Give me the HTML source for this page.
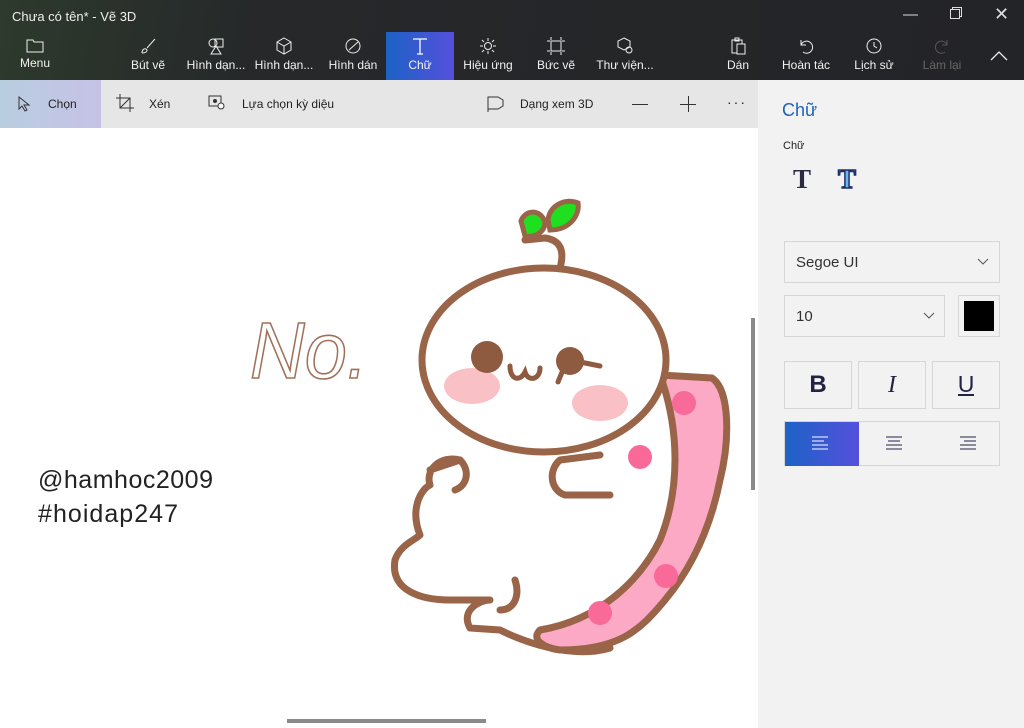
<!DOCTYPE html>
<html><head><meta charset="utf-8">
<style>
*{margin:0;padding:0;box-sizing:border-box}
body{width:1024px;height:728px;overflow:hidden;font-family:"Liberation Sans","Noto Sans CJK SC",sans-serif;background:#fff;position:relative}
#top{position:absolute;left:0;top:0;width:1024px;height:80px;background:linear-gradient(100deg,#2d3a2c 0%,#26282a 25%,#232427 100%);color:#fff}
.title{position:absolute;left:12px;top:9px;font-size:13px;color:#eee}
.wc{position:absolute;top:6px;font-size:15px;color:#ddd}
.tb{position:absolute;top:32px;height:48px;text-align:center;font-size:12px;color:#f2f2f2}
.tb svg{display:block;margin:5px auto 3px}
.tb.act{background:linear-gradient(90deg,#1d62c6,#5550dc)}
#sub{position:absolute;left:0;top:80px;width:758px;height:48px;background:#e6e6e6;font-size:12px;color:#222}
#sub .it{position:absolute;top:0;height:48px;line-height:48px}
#canvas{position:absolute;left:0;top:128px;width:758px;height:600px;background:#fff}
#panel{position:absolute;left:758px;top:80px;width:266px;height:648px;background:#f2f2f3}
.box{position:absolute;border:1px solid #d6d6d6;background:#f2f2f3}
</style></head><body>
<div id="top">
 <div class="title">Chưa có tên* - Vẽ 3D</div>
 <div class="wc" style="left:903px">&#8212;</div>
 <div class="wc" style="left:950px;top:9px;width:10px;height:10px;border:1px solid #ddd;box-shadow:2px -2px 0 -1px #232427,2px -2px 0 0 #ddd"></div>
 <div class="wc" style="left:994px;top:4px;font-size:18px">✕</div>
 <div class="tb" style="left:10px;width:50px"><svg width="18" height="16"><path d="M1 3h6l1 2h9v10H1z" fill="none" stroke="#eee"/></svg>Menu</div>
 <div class="tb" style="left:124px;width:48px"><svg width="18" height="18"><path d="M16 2 8 11M3 16c0-3 2-5 4-4s1 4-4 4" fill="none" stroke="#eee"/></svg>Bút vẽ</div>
 <div class="tb" style="left:185px;width:62px"><svg width="18" height="18"><circle cx="6" cy="6" r="4" fill="none" stroke="#eee"/><rect x="8" y="2" width="8" height="8" fill="none" stroke="#eee"/><path d="M9 9 4 17h10z" fill="none" stroke="#eee"/></svg>Hình dạn...</div>
 <div class="tb" style="left:253px;width:62px"><svg width="18" height="18"><path d="M9 1 16 5v8l-7 4-7-4V5zM2 5l7 4 7-4M9 9v8" fill="none" stroke="#eee"/></svg>Hình dạn...</div>
 <div class="tb" style="left:325px;width:56px"><svg width="18" height="18"><circle cx="9" cy="9" r="7" fill="none" stroke="#eee"/><path d="M5 13 14 5" stroke="#eee"/></svg>Hình dán</div>
 <div class="tb act" style="left:386px;width:68px"><svg width="18" height="18"><path d="M2 2h14M9 2v15M6 17h6" stroke="#fff" fill="none" stroke-width="1.3"/></svg>Chữ</div>
 <div class="tb" style="left:460px;width:56px"><svg width="18" height="18"><circle cx="9" cy="9" r="3.5" fill="none" stroke="#eee"/><path d="M9 1v3M9 14v3M1 9h3M14 9h3M3 3l2 2M13 13l2 2M3 15l2-2M13 5l2-2" stroke="#eee"/></svg>Hiệu ứng</div>
 <div class="tb" style="left:532px;width:48px"><svg width="18" height="18"><rect x="4" y="4" width="10" height="10" fill="none" stroke="#eee"/><path d="M4 0v3M14 0v3M4 15v3M14 15v3M0 4h3M0 14h3M15 4h3M15 14h3" stroke="#eee"/></svg>Bức vẽ</div>
 <div class="tb" style="left:594px;width:62px"><svg width="18" height="18"><path d="M8 1 14 4v6l-6 3-6-3V4z" fill="none" stroke="#eee"/><circle cx="13" cy="13" r="3" fill="none" stroke="#eee"/></svg>Thư viện...</div>
 <div class="tb" style="left:722px;width:32px"><svg width="18" height="18"><rect x="3" y="3" width="10" height="13" fill="none" stroke="#eee"/><rect x="8" y="7" width="8" height="10" fill="#232427" stroke="#eee"/><rect x="6" y="1" width="4" height="3" fill="none" stroke="#eee"/></svg>Dán</div>
 <div class="tb" style="left:778px;width:56px"><svg width="18" height="18"><path d="M4 3v5h5M4 8a6 6 0 1 1 2 7" fill="none" stroke="#eee"/></svg>Hoàn tác</div>
 <div class="tb" style="left:850px;width:48px"><svg width="18" height="18"><circle cx="9" cy="9" r="7" fill="none" stroke="#eee"/><path d="M9 5v4l3 2" fill="none" stroke="#eee"/></svg>Lịch sử</div>
 <div class="tb" style="left:918px;width:48px;color:#666"><svg width="18" height="18"><path d="M14 3v5H9M14 8a6 6 0 1 0-2 7" fill="none" stroke="#555"/></svg>Làm lại</div>
 <svg style="position:absolute;left:990px;top:50px" width="18" height="12"><path d="M1 10 9 2l8 8" fill="none" stroke="#eee" stroke-width="1.3"/></svg>
</div>
<div id="sub">
 <div class="it" style="left:0;width:101px;background:linear-gradient(90deg,#b9cde0,#c6c2e6)"><svg style="position:absolute;left:17px;top:16px" width="14" height="16"><path d="M2 1v12l3-3 3 5 2-1-3-5h5z" fill="none" stroke="#333"/></svg><span style="position:absolute;left:48px">Chọn</span></div>
 <div class="it" style="left:116px"><svg style="position:absolute;left:0;top:14px" width="18" height="18"><path d="M4 0v14h14M0 4h14v14M14 4 4 14" fill="none" stroke="#333"/></svg><span style="position:absolute;left:33px">Xén</span></div>
 <div class="it" style="left:208px;width:140px"><svg style="position:absolute;left:0;top:15px" width="18" height="16"><rect x="1" y="1" width="12" height="10" fill="none" stroke="#333"/><circle cx="7" cy="6" r="2" fill="#333"/><circle cx="13" cy="11" r="3" fill="#fff" stroke="#333"/></svg><span style="position:absolute;left:34px;white-space:nowrap">Lựa chọn kỳ diệu</span></div>
 <div class="it" style="left:487px;width:120px"><svg style="position:absolute;left:0;top:16px" width="18" height="16"><path d="M1 1h10l5 3v6l-5 3H1zM1 1v15" fill="none" stroke="#333"/></svg><span style="position:absolute;left:33px;white-space:nowrap">Dạng xem 3D</span></div>
 <div style="position:absolute;left:632px;top:24px;width:16px;height:1px;background:#333"></div>
 <div style="position:absolute;left:680px;top:24px;width:16px;height:1px;background:#333"></div>
 <div style="position:absolute;left:688px;top:16px;width:1px;height:16px;background:#333"></div>
 <div style="position:absolute;left:727px;top:14px;font-size:14px;letter-spacing:2px">···</div>
</div>
<div id="canvas">
<svg width="758" height="600" viewBox="0 128 758 600" style="position:absolute;left:0;top:0">
 <text x="250" y="378" font-family="Liberation Sans" font-style="italic" font-size="80" fill="none" stroke="#a0705a" stroke-width="1.6" textLength="118" lengthAdjust="spacingAndGlyphs">No.</text>
 <text x="38" y="488" font-family="Liberation Sans" font-size="25" fill="#222" textLength="175">@hamhoc2009</text>
 <text x="38" y="522" font-family="Liberation Sans" font-size="25" fill="#222" textLength="140">#hoidap247</text>
 <g stroke="#9a6448" stroke-width="7" stroke-linecap="round" stroke-linejoin="round">
  <path d="M610 648 C570 660 520 640 500 630 L470 628 C460 610 480 600 490 600 L450 600 C420 600 390 590 395 560 C400 545 415 540 420 535 C410 510 420 490 430 485 C425 470 440 455 460 460" fill="#fff"/>
  <path d="M660 375 L712 378 C730 390 730 440 720 480 C710 530 690 570 665 600 C640 630 620 650 560 650 C545 648 530 640 540 630 C600 620 640 580 660 540 C680 490 680 430 660 375Z" fill="#fba9c4"/>
  <ellipse cx="544" cy="360" rx="122" ry="92" fill="#fff"/>
  <path d="M560 268 C565 250 560 240 545 238 L525 240" fill="none"/>
  <path d="M600 455 L560 460 C548 470 550 490 565 495 L610 495" fill="#fff"/>
  <path d="M430 470 L460 460 C470 470 468 485 455 490" fill="#fff"/>
  <path d="M515 580 C520 595 515 610 500 610" fill="none"/>
 </g>
 <path d="M521 221 C525 210 540 208 545 222 C545 232 535 238 525 236Z" fill="#1fe01f" stroke="#9a6448" stroke-width="5"/>
 <path d="M548 220 C550 205 565 198 578 203 C580 215 570 230 550 230Z" fill="#1fe01f" stroke="#9a6448" stroke-width="5"/>
 <ellipse cx="472" cy="386" rx="28" ry="18" fill="#f7b0b8" opacity=".8"/>
 <ellipse cx="600" cy="403" rx="28" ry="18" fill="#f7b0b8" opacity=".8"/>
 <circle cx="487" cy="357" r="16" fill="#8e5a40"/>
 <circle cx="570" cy="361" r="14" fill="#8e5a40"/>
 <path d="M558 382 L565 365 M570 360 L600 366 M510 366 C510 380 520 382 525 372 C528 382 540 380 540 368" fill="none" stroke="#8e5a40" stroke-width="5" stroke-linecap="round"/>
 <g fill="#fa6a98"><circle cx="684" cy="403" r="12"/><circle cx="640" cy="457" r="12"/><circle cx="666" cy="576" r="12"/><circle cx="600" cy="613" r="12"/></g>
</svg>
 <div style="position:absolute;left:751px;top:190px;width:4px;height:172px;background:#8a8a8a"></div>
 <div style="position:absolute;left:287px;top:591px;width:199px;height:4px;background:#8a8a8a"></div>
</div>
<div id="panel">
 <div style="position:absolute;left:24px;top:20px;font-size:18px;color:#1f63b8">Chữ</div>
 <div style="position:absolute;left:25px;top:60px;font-size:11px;color:#222">Chữ</div>
 <div style="position:absolute;left:35px;top:84px;font-size:27px;font-weight:bold;font-family:'Liberation Serif',serif;color:#2a2a45">T</div>
 <div style="position:absolute;left:80px;top:84px;font-size:27px;font-weight:bold;font-family:'Liberation Serif',serif;color:#6cb4f2;-webkit-text-stroke:1.5px #20306a">T</div>
 <div class="box" style="left:26px;top:161px;width:216px;height:42px"><span style="position:absolute;left:11px;top:12px;font-size:15px;color:#333">Segoe UI</span><svg style="position:absolute;left:192px;top:16px" width="12" height="8"><path d="M1 1l5 5 5-5" fill="none" stroke="#555"/></svg></div>
 <div class="box" style="left:26px;top:215px;width:161px;height:42px"><span style="position:absolute;left:11px;top:12px;font-size:15px;color:#333">10</span><svg style="position:absolute;left:138px;top:16px" width="12" height="8"><path d="M1 1l5 5 5-5" fill="none" stroke="#555"/></svg></div>
 <div class="box" style="left:200px;top:215px;width:42px;height:42px"><div style="position:absolute;left:5px;top:5px;width:30px;height:30px;background:#000"></div></div>
 <div class="box" style="left:26px;top:281px;width:68px;height:48px;text-align:center;line-height:46px;font-size:24px;font-weight:bold;color:#222244">B</div>
 <div class="box" style="left:100px;top:281px;width:68px;height:48px;text-align:center;line-height:46px;font-size:24px;font-style:italic;font-family:'Liberation Serif',serif;color:#222244">I</div>
 <div class="box" style="left:174px;top:281px;width:68px;height:48px;text-align:center;line-height:44px;font-size:23px;color:#222244"><span style="border-bottom:2px solid #222244;line-height:20px;display:inline-block">U</span></div>
 <div class="box" style="left:26px;top:341px;width:216px;height:45px"></div>
 <div style="position:absolute;left:27px;top:342px;width:74px;height:44px;background:linear-gradient(90deg,#1d62c6,#5550dc)"></div>
 <svg style="position:absolute;left:54px;top:356px" width="18" height="14"><path d="M0 1h16M0 5h12M0 9h16M0 13h16" stroke="#fff"/></svg>
 <svg style="position:absolute;left:128px;top:356px" width="18" height="14"><path d="M0 1h16M2 5h12M0 9h16M0 13h16" stroke="#222244"/></svg>
 <svg style="position:absolute;left:202px;top:356px" width="18" height="14"><path d="M0 1h16M4 5h12M0 9h16M0 13h16" stroke="#222244"/></svg>
</div>
</body></html>
